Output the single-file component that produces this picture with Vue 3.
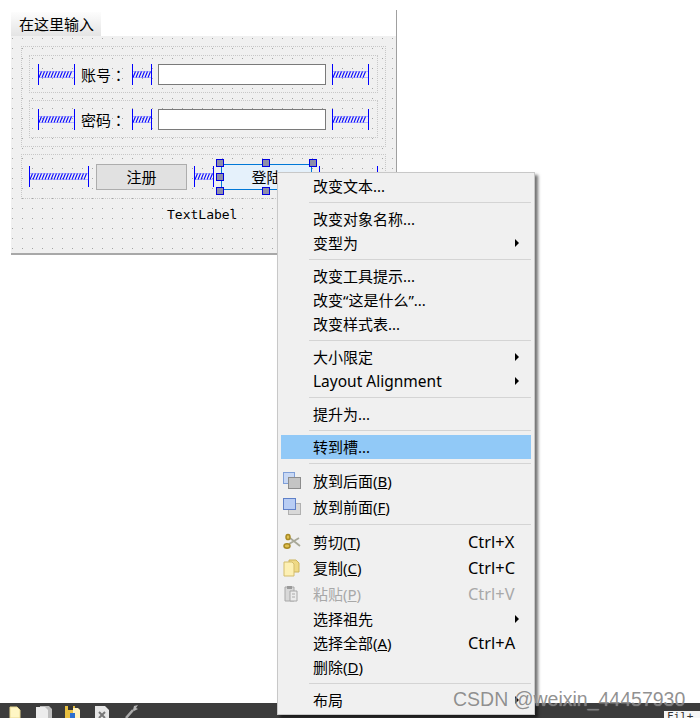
<script setup>
import { h } from 'vue'

const springPath = (w) => {
  let d = ''
  for (let x = 1; x < w - 3; x += 3) d += `M${x} 13.5L${x + 2.5} 7.5`
  return d
}

const Spring = (props) =>
  h('svg', { width: props.w, height: 21, viewBox: `0 0 ${props.w} 21`, style: 'display:block;flex:none' }, [
    h('path', { d: `M1 7.5H${props.w - 1}M1 13.5H${props.w - 1}`, fill: 'none', stroke: '#b8b8ff', 'stroke-width': 1 }),
    h('path', { d: springPath(props.w), fill: 'none', stroke: '#0808ff', 'stroke-width': 1.1 }),
    h('rect', { x: 0, y: 0, width: 1, height: 21, fill: '#0000ff' }),
    h('rect', { x: props.w - 1, y: 0, width: 1, height: 21, fill: '#0000ff' })
  ])
Spring.props = ['w']

const rows = ['账号：', '密码：']
const handles = ['tl', 'tm', 'tr', 'ml', 'bl', 'bm']

const menu = [
  { t: '改变文本...' },
  { sep: true },
  { t: '改变对象名称...' },
  { t: '变型为', arrow: true },
  { sep: true },
  { t: '改变工具提示...' },
  { t: '改变“这是什么”...' },
  { t: '改变样式表...' },
  { sep: true },
  { t: '大小限定', arrow: true },
  { t: 'Layout Alignment', arrow: true, latin: true },
  { sep: true },
  { t: '提升为...' },
  { sep: true },
  { t: '转到槽...', active: true },
  { sep: true },
  { t: '放到后面(', u: 'B', tail: ')', icon: 'back', tall: true },
  { t: '放到前面(', u: 'F', tail: ')', icon: 'front', tall: true },
  { sep: true },
  { t: '剪切(', u: 'T', tail: ')', key: 'Ctrl+X', icon: 'cut', tall: true },
  { t: '复制(', u: 'C', tail: ')', key: 'Ctrl+C', icon: 'copy', tall: true },
  { t: '粘贴(', u: 'P', tail: ')', key: 'Ctrl+V', icon: 'paste', tall: true, off: true },
  { t: '选择祖先', arrow: true },
  { t: '选择全部(', u: 'A', tail: ')', key: 'Ctrl+A' },
  { t: '删除(', u: 'D', tail: ')' },
  { sep: true },
  { t: '布局', arrow: true }
]
</script>

<template>
  <div class="page">
    <div class="designer">
      <div class="tab">在这里输入</div>
      <div class="form">
        <div class="outer">
          <div v-for="label in rows" :key="label" class="row">
            <Spring :w="37" />
            <span class="label">{{ label }}</span>
            <Spring :w="20" />
            <div class="input"></div>
            <Spring :w="37" />
          </div>
        </div>
        <div class="buttons">
          <Spring :w="60" />
          <div class="btn">注册</div>
          <Spring :w="20" />
          <div class="btn selected">
            登陆
            <i v-for="p in handles" :key="p" class="handle" :class="p"></i>
          </div>
          <Spring :w="59" />
        </div>
        <div class="textlabel">TextLabel</div>
      </div>
    </div>

    <div class="taskbar">
      <svg class="task-icons" width="150" height="15" viewBox="0 0 150 15">
        <path d="M10 4h7l3 3v8H10z" fill="#fff6c4" stroke="#e8d890" />
        <path d="M40 3h9l3 3v9H40z" fill="#bdbdbd" />
        <path d="M36 4h9l3 3v8H36z" fill="#ececec" />
        <path d="M65 3h10v12H65z" fill="#e8c040" />
        <path d="M68 3h5v4h-5z" fill="#333" />
        <path d="M73 5h5l2 2v8h-7z" fill="#fff2c0" />
        <path d="M70 10h5v5h-5z" fill="#2b6fd0" />
        <path d="M95 3h10l4 4v8H95z" fill="#e6e6e6" />
        <path d="M99 9l6 6M105 9l-6 6" stroke="#777" stroke-width="2" />
        <path d="M126 15l7-8" stroke="#aaa" stroke-width="2.5" />
        <path d="M133 7l1-4 4-1-2 3 2 1-4 2z" fill="#b5b5b5" />
      </svg>
      <div class="file-tab">Fil+</div>
    </div>

    <div class="menu">
      <template v-for="(m, i) in menu" :key="i">
        <div v-if="m.sep" class="sep"></div>
        <div v-else class="item" :class="{ active: m.active, tall: m.tall, off: m.off }">
          <span class="ico">
            <svg v-if="m.icon === 'back'" width="18" height="18" viewBox="0 0 18 18">
              <rect x="0.5" y="0.5" width="11" height="11" fill="#c8d8f4" stroke="#7f9fd8" />
              <rect x="5.5" y="5.5" width="12" height="11" fill="#c4c4c4" stroke="#8c8c8c" />
            </svg>
            <svg v-else-if="m.icon === 'front'" width="18" height="18" viewBox="0 0 18 18">
              <rect x="5.5" y="5.5" width="12" height="11" fill="#d8d8d8" stroke="#b0b0b0" />
              <rect x="0.5" y="0.5" width="12" height="11" fill="#b8cdf4" stroke="#5f80c8" />
            </svg>
            <svg v-else-if="m.icon === 'cut'" width="18" height="18" viewBox="0 0 18 18">
              <path d="M6 11L16 5M7 5l10 8" stroke="#a8a898" stroke-width="1.8" fill="none" />
              <ellipse cx="4" cy="13" rx="3" ry="2.2" fill="#e0c050" stroke="#a88a24" stroke-width="1.5" />
              <ellipse cx="5" cy="4" rx="2" ry="2.6" fill="#e0c050" stroke="#a88a24" stroke-width="1.5" />
            </svg>
            <svg v-else-if="m.icon === 'copy'" width="18" height="18" viewBox="0 0 18 18">
              <path d="M6 1h7l3 3v9H6z" fill="#efd985" stroke="#cdb45c" />
              <path d="M1 3h8l2 2v12H1z" fill="#fdf0b4" stroke="#d4bd6c" />
            </svg>
            <svg v-else-if="m.icon === 'paste'" width="18" height="18" viewBox="0 0 18 18">
              <path d="M2 2h9v14H2z" fill="#d8d8d8" stroke="#a8a8a8" />
              <path d="M4 1h5v3H4z" fill="#9a9a9a" />
              <path d="M7 6h7v10H7z" fill="#ececec" stroke="#a8a8a8" />
              <path d="M9 9h3M9 12h3" stroke="#aaa" />
            </svg>
          </span>
          <span class="text" :class="{ latin: m.latin }">{{ m.t }}<u v-if="m.u">{{ m.u }}</u>{{ m.tail }}</span>
          <span v-if="m.key" class="key">{{ m.key }}</span>
          <span v-if="m.arrow" class="arrow"></span>
        </div>
      </template>
    </div>

    <div class="watermark">CSDN @weixin_44457930</div>
  </div>
</template>

<style scoped>
.page {
  position: relative;
  width: 700px;
  height: 718px;
  overflow: hidden;
  background: #fff;
  display: flex;
  flex-direction: column;
  font-family: "Noto Sans CJK SC", "Liberation Sans", sans-serif;
  color: #000;
}
.designer {
  width: 385px;
  margin: 10px 0 0 11px;
  padding-top: 2px;
  border-right: 1px solid #a0a0a0;
}
.tab {
  width: 90px;
  height: 24px;
  box-sizing: border-box;
  padding-left: 8px;
  font-size: 15px;
  line-height: 23px;
  background: linear-gradient(#fdfdfd, #e4e4e4);
}
.form {
  box-sizing: border-box;
  height: 219px;
  padding: 10px 10px 0;
  background-color: #f0f0f0;
  background-image: radial-gradient(circle at 1.5px 2.5px, #a4a4a4 0.71px, transparent 0.71px);
  background-size: 10px 10px;
  border-bottom: 2px solid #a8a8a8;
}
.outer {
  box-sizing: border-box;
  height: 101px;
  border: 1px dotted #c8c8c8;
  padding: 8px 7px 0;
  display: flex;
  flex-direction: column;
  gap: 7px;
}
.row {
  box-sizing: border-box;
  height: 38px;
  border: 1px dotted #c8c8c8;
  display: flex;
  align-items: center;
  gap: 6px;
  padding-left: 8px;
}
.label {
  width: 45px;
  flex: none;
  font-family: "Noto Sans CJK TC", sans-serif;
  font-size: 15px;
  line-height: 21px;
}
.input {
  width: 168px;
  height: 21px;
  flex: none;
  box-sizing: border-box;
  background: #fff;
  border: 1px solid #7a7a7a;
}
.buttons {
  box-sizing: border-box;
  height: 45px;
  margin-top: 7px;
  border: 1px dotted #c8c8c8;
  display: flex;
  align-items: center;
  gap: 7px;
  padding-left: 7px;
}
.btn {
  position: relative;
  width: 91px;
  height: 26px;
  flex: none;
  box-sizing: border-box;
  background: #e1e1e1;
  border: 1px solid #adadad;
  font-size: 15px;
  line-height: 24px;
  text-align: center;
}
.btn.selected {
  background: #e5f1fb;
  border-color: #0078d7;
}
.handle {
  position: absolute;
  width: 6px;
  height: 6px;
  background: #8e8ea8;
  border: 1px solid #0000e0;
}
.tl { left: -6px; top: -6px; }
.tm { left: 40px; top: -6px; }
.tr { left: 87px; top: -6px; }
.ml { left: -6px; top: 8px; }
.bl { left: -6px; top: 22px; }
.bm { left: 40px; top: 22px; }
.textlabel {
  margin-top: 8px;
  padding-left: 146px;
  font-family: "DejaVu Sans Mono", monospace;
  font-size: 13px;
  line-height: 16px;
}
.taskbar {
  position: relative;
  margin-top: auto;
  height: 15px;
  background: #3c3c3c;
  overflow: hidden;
}
.task-icons {
  display: block;
  filter: blur(0.4px);
}
.file-tab {
  position: absolute;
  left: 664px;
  top: 8px;
  width: 36px;
  height: 12px;
  background: #f6f6f6;
  padding-left: 3px;
  font-family: "DejaVu Sans Mono", monospace;
  font-size: 11px;
  line-height: 12px;
  color: #333;
}
.menu {
  position: absolute;
  left: 277px;
  top: 172px;
  width: 258px;
  height: 543px;
  box-sizing: border-box;
  padding-top: 1px;
  background: #f0f0f0;
  border: 1px solid #c8c8c8;
  box-shadow: 3px 3px 3px rgba(0, 0, 0, 0.55);
  font-family: "Noto Sans", "Noto Sans CJK SC", sans-serif;
  font-size: 15px;
}
.sep {
  height: 1px;
  margin: 4px 3px 4px 31px;
  background: #d4d4d4;
}
.item {
  display: flex;
  align-items: center;
  height: 24px;
  margin: 0 3px;
  padding-left: 2px;
  line-height: 24px;
  white-space: nowrap;
}
.item.tall {
  height: 26px;
}
.item.active {
  background: #91c9f7;
}
.item.off {
  color: #a8a8a8;
}
.ico {
  width: 18px;
  height: 18px;
  margin-right: 12px;
  flex: none;
}
.ico svg {
  display: block;
}
.text {
  width: 155px;
  flex: none;
}
.text.latin {
  font-size: 15.5px;
}
.key {
  font-size: 16.4px;
}
.arrow {
  margin-left: 47px;
  width: 0;
  height: 0;
  border-left: 4px solid #000;
  border-top: 4px solid transparent;
  border-bottom: 4px solid transparent;
}
.watermark {
  position: absolute;
  left: 453px;
  top: 687px;
  font-family: "Liberation Sans", sans-serif;
  font-size: 19.5px;
  line-height: 24px;
  color: rgba(125, 125, 125, 0.85);
  text-shadow: 0 0 1px rgba(255, 255, 255, 0.5);
  white-space: nowrap;
}
</style>
